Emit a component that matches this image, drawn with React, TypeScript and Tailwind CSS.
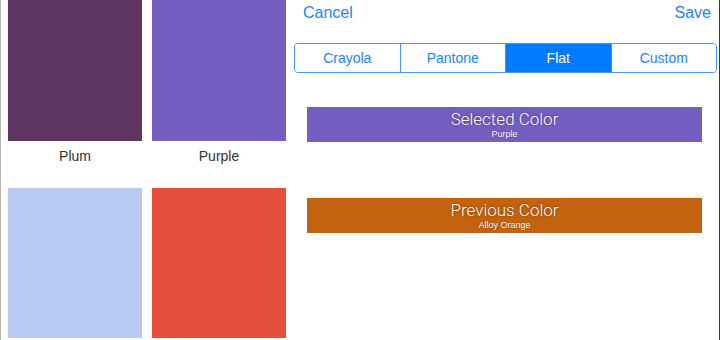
import { useState } from 'react';

const swatches = [
  { name: 'Plum', color: '#5e3560' },
  { name: 'Purple', color: '#745ec2' },
  { name: 'Powder Blue', color: '#b8caf1' },
  { name: 'Red', color: '#e64e3c' },
];

const tabs = ['Crayola', 'Pantone', 'Flat', 'Custom'];

const ColorBar = ({ title, name, bg }: { title: string; name: string; bg: string }) => (
  <div className={`mx-[17px] h-[35px] flex flex-col items-center justify-center text-white ${bg}`}>
    <div className="text-[17px] font-light leading-[19px] font-['Roboto',sans-serif] [text-shadow:0_0_3px_rgba(0,0,0,0.45)]">
      {title}
    </div>
    <div className="text-[9px] leading-[11px] font-['Liberation_Sans',sans-serif] [text-shadow:0_0_2px_rgba(0,0,0,0.45)]">
      {name}
    </div>
  </div>
);

const App = () => {
  const [selected, setSelected] = useState('Flat');

  return (
    <div className="w-[720px] h-[340px] overflow-hidden flex bg-white border-l border-l-[#b5b5b5] border-r border-r-[#3a3a3a] font-['Liberation_Sans',sans-serif]">
      {/* Swatch collection (scrolled a little) */}
      <div className="w-[289px] shrink-0 pl-[7px] overflow-hidden">
        <div className="-mt-[9px] grid grid-cols-[134px_134px] gap-x-[10px] gap-y-[17px]">
          {swatches.map((s, i) => (
            <div key={s.name} className="flex flex-col">
              <div className="h-[150px]" style={{ backgroundColor: s.color }} />
              {/* labels of the second row sit below the fold */}
              {i < 2 && (
                <div className="h-[30px] flex items-center justify-center text-[14px] text-[#333]">
                  {s.name}
                </div>
              )}
            </div>
          ))}
        </div>
      </div>

      {/* Picker panel */}
      <div className="flex-1 flex flex-col">
        <div className="h-[26px] pl-[13px] pr-[8px] flex items-center justify-between text-[16px] text-[#1a84ff]">
          <span>Cancel</span>
          <span>Save</span>
        </div>

        <div className="mt-[17px] ml-[4px] mr-[2px] h-[30px] flex border border-[#3d97ff] rounded-[4px] overflow-hidden">
          {tabs.map((t, i) => (
            <button
              key={t}
              onClick={() => setSelected(t)}
              className={`flex-1 flex items-center justify-center text-[14px] ${
                i > 0 ? 'border-l border-[#3d97ff]' : ''
              } ${selected === t ? 'bg-[#007aff] text-white' : 'bg-white text-[#1a84ff]'}`}
            >
              {t}
            </button>
          ))}
        </div>

        <div className="mt-[34px]">
          <ColorBar title="Selected Color" name="Purple" bg="bg-[#745ec2]" />
        </div>
        <div className="mt-[56px]">
          <ColorBar title="Previous Color" name="Alloy Orange" bg="bg-[#c46210]" />
        </div>
      </div>
    </div>
  );
};

export default App;
